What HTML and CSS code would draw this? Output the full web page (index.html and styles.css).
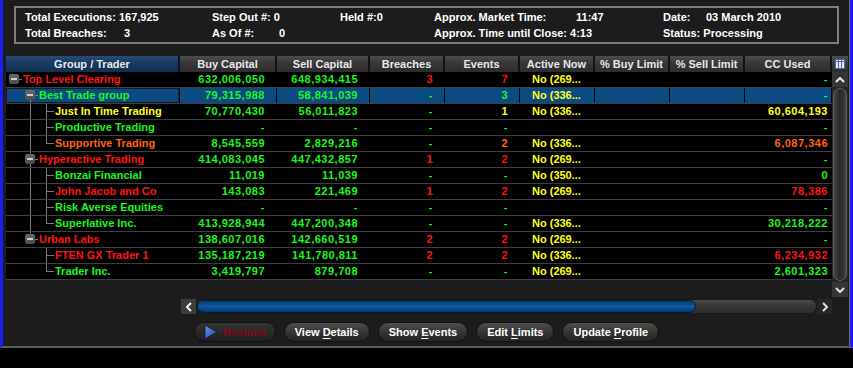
FILE: index.html
```html
<!DOCTYPE html>
<html lang="en">
<head>
  <meta charset="UTF-8">
  <title>Risk Monitor</title>
  <link rel="stylesheet" href="styles.css">
</head>
<body>

  <div class="window">

    <div class="summary">
      <span>Total Executions: 167,925</span>
      <span>Step Out #: 0</span>
      <span>Held #:0</span>
      <span><span class="lbl lbl-time">Approx. Market Time:</span>11:47</span>
      <span><span class="lbl lbl-date">Date:</span>03 March 2010</span>

      <span><span class="lbl lbl-breach">Total Breaches:</span>3</span>
      <span><span class="lbl lbl-asof">As Of #:</span>0</span>
      <span></span>
      <span>Approx. Time until Close: 4:13</span>
      <span>Status: Processing</span>
    </div>

    <div class="frame">
      <div class="grid">
        <div class="head">
          <div class="h-tree">Group / Trader</div>
          <div>Buy Capital</div>
          <div>Sell Capital</div>
          <div>Breaches</div>
          <div>Events</div>
          <div>Active Now</div>
          <div>% Buy Limit</div>
          <div>% Sell Limit</div>
          <div>CC Used</div>
        </div>

        <div class="row">
          <div class="tree r"><span class="gd exp"><span class="box"></span></span><span class="name">Top Level Clearing</span></div>
          <div class="n g">632,006,050</div><div class="n g">648,934,415</div>
          <div class="n r">3</div><div class="n r">7</div>
          <div class="an">No (269...</div><div></div><div></div>
          <div class="n cc g">-</div>
        </div>

        <div class="row sel">
          <div class="tree g focus"><span class="gd"></span><span class="gd exp down"><span class="box"></span></span><span class="name">Best Trade group</span></div>
          <div class="n g">79,315,988</div><div class="n g">58,841,039</div>
          <div class="n g">-</div><div class="n g">3</div>
          <div class="an">No (336...</div><div></div><div></div>
          <div class="n cc g">-</div>
        </div>

        <div class="row">
          <div class="tree y"><span class="gd"></span><span class="gd pipe"></span><span class="gd tee"></span><span class="name">Just In Time Trading</span></div>
          <div class="n g">70,770,430</div><div class="n g">56,011,823</div>
          <div class="n g">-</div><div class="n y">1</div>
          <div class="an">No (336...</div><div></div><div></div>
          <div class="n cc y">60,604,193</div>
        </div>

        <div class="row">
          <div class="tree g"><span class="gd"></span><span class="gd pipe"></span><span class="gd tee"></span><span class="name">Productive Trading</span></div>
          <div class="n g">-</div><div class="n g">-</div>
          <div class="n g">-</div><div class="n g">-</div>
          <div class="an"></div><div></div><div></div>
          <div class="n cc g">-</div>
        </div>

        <div class="row">
          <div class="tree o"><span class="gd"></span><span class="gd pipe"></span><span class="gd end"></span><span class="name">Supportive Trading</span></div>
          <div class="n g">8,545,559</div><div class="n g">2,829,216</div>
          <div class="n g">-</div><div class="n o">2</div>
          <div class="an">No (336...</div><div></div><div></div>
          <div class="n cc o">6,087,346</div>
        </div>

        <div class="row">
          <div class="tree r"><span class="gd"></span><span class="gd exp through"><span class="box"></span></span><span class="name">Hyperactive Trading</span></div>
          <div class="n g">414,083,045</div><div class="n g">447,432,857</div>
          <div class="n r">1</div><div class="n r">2</div>
          <div class="an">No (269...</div><div></div><div></div>
          <div class="n cc g">-</div>
        </div>

        <div class="row">
          <div class="tree g"><span class="gd"></span><span class="gd pipe"></span><span class="gd tee"></span><span class="name">Bonzai Financial</span></div>
          <div class="n g">11,019</div><div class="n g">11,039</div>
          <div class="n g">-</div><div class="n g">-</div>
          <div class="an">No (350...</div><div></div><div></div>
          <div class="n cc g">0</div>
        </div>

        <div class="row">
          <div class="tree r"><span class="gd"></span><span class="gd pipe"></span><span class="gd tee"></span><span class="name">John Jacob and Co</span></div>
          <div class="n g">143,083</div><div class="n g">221,469</div>
          <div class="n r">1</div><div class="n r">2</div>
          <div class="an">No (269...</div><div></div><div></div>
          <div class="n cc r">78,386</div>
        </div>

        <div class="row">
          <div class="tree g"><span class="gd"></span><span class="gd pipe"></span><span class="gd tee"></span><span class="name">Risk Averse Equities</span></div>
          <div class="n g">-</div><div class="n g">-</div>
          <div class="n g">-</div><div class="n g">-</div>
          <div class="an"></div><div></div><div></div>
          <div class="n cc g">-</div>
        </div>

        <div class="row">
          <div class="tree g"><span class="gd"></span><span class="gd pipe"></span><span class="gd end"></span><span class="name">Superlative Inc.</span></div>
          <div class="n g">413,928,944</div><div class="n g">447,200,348</div>
          <div class="n g">-</div><div class="n g">-</div>
          <div class="an">No (336...</div><div></div><div></div>
          <div class="n cc g">30,218,222</div>
        </div>

        <div class="row">
          <div class="tree r"><span class="gd"></span><span class="gd exp up"><span class="box"></span></span><span class="name">Urban Labs</span></div>
          <div class="n g">138,607,016</div><div class="n g">142,660,519</div>
          <div class="n r">2</div><div class="n r">2</div>
          <div class="an">No (269...</div><div></div><div></div>
          <div class="n cc g">-</div>
        </div>

        <div class="row">
          <div class="tree r"><span class="gd"></span><span class="gd"></span><span class="gd tee"></span><span class="name">FTEN GX Trader 1</span></div>
          <div class="n g">135,187,219</div><div class="n g">141,780,811</div>
          <div class="n r">2</div><div class="n r">2</div>
          <div class="an">No (336...</div><div></div><div></div>
          <div class="n cc r">6,234,932</div>
        </div>

        <div class="row">
          <div class="tree g"><span class="gd"></span><span class="gd"></span><span class="gd end"></span><span class="name">Trader Inc.</span></div>
          <div class="n g">3,419,797</div><div class="n g">879,708</div>
          <div class="n g">-</div><div class="n g">-</div>
          <div class="an">No (269...</div><div></div><div></div>
          <div class="n cc g">2,601,323</div>
        </div>
      </div>

      <div class="vscroll">
        <div class="colpick">
          <svg width="10" height="10" viewBox="0 0 10 10">
            <rect x="0" y="0" width="10" height="10" fill="#5a64a8"/>
            <rect x="1" y="1" width="2" height="8" fill="#dfe3ff"/>
            <rect x="4" y="1" width="2" height="8" fill="#dfe3ff"/>
            <rect x="7" y="1" width="2" height="8" fill="#dfe3ff"/>
            <rect x="0" y="2" width="10" height="1" fill="#5a64a8"/>
          </svg>
        </div>
        <div class="vs-btn">
          <svg width="10" height="6" viewBox="0 0 10 6"><polyline points="1,5 5,1 9,5" fill="none" stroke="#e6e6e6" stroke-width="2"/></svg>
        </div>
        <div class="vs-thumb"></div>
        <div class="vs-btn">
          <svg width="10" height="6" viewBox="0 0 10 6"><polyline points="1,1 5,5 9,1" fill="none" stroke="#e6e6e6" stroke-width="2"/></svg>
        </div>
      </div>
    </div>

    <div class="hscroll">
      <div class="hs-btn hs-left">
        <svg width="6" height="10" viewBox="0 0 6 10"><polyline points="5,1 1,5 5,9" fill="none" stroke="#eee" stroke-width="2"/></svg>
      </div>
      <div class="hs-track">
        <div class="hs-thumb"></div>
      </div>
      <div class="hs-btn hs-right">
        <svg width="6" height="10" viewBox="0 0 6 10"><polyline points="1,1 5,5 1,9" fill="none" stroke="#ddd" stroke-width="2"/></svg>
      </div>
    </div>

    <div class="actions">
      <button class="btn btn-off">
        <svg class="play" width="14" height="16" viewBox="0 0 14 16">
          <defs>
            <linearGradient id="play" x1="0" y1="0" x2="1" y2="1">
              <stop offset="0" stop-color="#6f9ae6"/>
              <stop offset="1" stop-color="#1d3f8f"/>
            </linearGradient>
          </defs>
          <polygon points="1,1 13,8 1,15" fill="url(#play)" stroke="#0e2050" stroke-width="1"/>
        </svg>
        <span>Resume</span>
      </button>
      <button class="btn"><span>View <u>D</u>etails</span></button>
      <button class="btn"><span>Show <u>E</u>vents</span></button>
      <button class="btn"><span>Edit <u>L</u>imits</span></button>
      <button class="btn"><span>Update <u>P</u>rofile</span></button>
    </div>

  </div>

</body>
</html>
```

FILE: styles.css
```css
* {
  box-sizing: border-box;
}

body {
  margin: 0;
  background: #000;
  color: #fff;
  font: bold 11px "Liberation Sans", Arial, sans-serif;
}

.window {
  height: 348px;
  padding-top: 6px;
  background: #1c1c1c;
  border-left: 3px solid #1d1df2;
  border-right: 3px solid #1d1df2;
  border-bottom: 2px solid #5c5c5c;
  box-shadow: inset -1px 0 #6e6e6e;
}

/* summary panel */

.summary {
  width: 825px;
  height: 38px;
  margin-left: 11px;
  padding: 1px 0 1px 9px;
  border: 2px solid #7e7e7e;
  display: grid;
  grid-template-columns: 187px 128px 94px 229px 1fr;
  grid-auto-rows: 16px;
  line-height: 16px;
  white-space: nowrap;
}

.lbl {
  display: inline-block;
}

.lbl-breach { width: 99px; }
.lbl-asof { width: 67px; }
.lbl-time { width: 142px; }
.lbl-date { width: 43px; }

/* grid */

.frame {
  display: flex;
  height: 241px;
  margin: 12px 0 0 3px;
}

.grid {
  width: 826px;
  --cols: 174px 97px 93px 75px 75px 75px 75px 75px 87px;
}

.head {
  display: grid;
  grid-template-columns: var(--cols);
  height: 16px;
}

.head > div {
  background: linear-gradient(#4c4c4c, #383838 45%, #2c2c2c);
  border-right: 2px solid #121212;
  color: #e8e8e8;
  text-align: center;
  line-height: 16px;
  white-space: nowrap;
  overflow: hidden;
}

.head > .h-tree {
  background: linear-gradient(#2a4c74, #183a62 45%, #11304f);
}

.row {
  display: grid;
  grid-template-columns: var(--cols);
  height: 16px;
  background: #000;
  border-bottom: 1px solid #3e3e3e;
}

.row > div {
  line-height: 15px;
  border-right: 1px solid #000;
  white-space: nowrap;
  overflow: hidden;
}

.row.sel {
  background: #0a4b84;
}

.row.sel > .focus {
  box-shadow: inset 0 0 0 1px #1b1b1b;
}

.n {
  text-align: right;
  padding-right: 11px;
  letter-spacing: 0.5px;
}

.n.cc {
  padding-right: 3px;
}

.an {
  padding-left: 12px;
  color: #ffff1a;
}

.r { color: #ff1414; }
.g { color: #1ef51e; }
.y { color: #ffff1a; }
.o { color: #ff6410; }

/* tree guides */

.tree {
  display: flex;
}

.gd {
  flex: none;
  width: 16px;
  height: 15px;
  --ln: #7a7a7a;
}

.name {
  padding-left: 1px;
}

.pipe {
  background: linear-gradient(var(--ln), var(--ln)) 8px 0 / 1px 100% no-repeat;
}

.tee {
  background:
    linear-gradient(var(--ln), var(--ln)) 8px 0 / 1px 100% no-repeat,
    linear-gradient(var(--ln), var(--ln)) 8px 7px / 8px 1px no-repeat;
}

.end {
  background:
    linear-gradient(var(--ln), var(--ln)) 8px 0 / 1px 8px no-repeat,
    linear-gradient(var(--ln), var(--ln)) 8px 7px / 8px 1px no-repeat;
}

.exp {
  display: flex;
  align-items: center;
  padding-left: 3px;
  background: linear-gradient(var(--ln), var(--ln)) 12px 7px / 4px 1px no-repeat;
}

.exp.down {
  background:
    linear-gradient(var(--ln), var(--ln)) 12px 7px / 4px 1px no-repeat,
    linear-gradient(var(--ln), var(--ln)) 8px 7px / 1px 8px no-repeat;
}

.exp.through {
  background:
    linear-gradient(var(--ln), var(--ln)) 12px 7px / 4px 1px no-repeat,
    linear-gradient(var(--ln), var(--ln)) 8px 0 / 1px 100% no-repeat;
}

.exp.up {
  background:
    linear-gradient(var(--ln), var(--ln)) 12px 7px / 4px 1px no-repeat,
    linear-gradient(var(--ln), var(--ln)) 8px 0 / 1px 8px no-repeat;
}

.box {
  width: 10px;
  height: 10px;
  margin-top: -1px;
  border-radius: 2px;
  background:
    linear-gradient(#cfcfcf, #cfcfcf) center / 6px 2px no-repeat,
    linear-gradient(#6a6a6a, #4a4a4a);
}

/* vertical scroll bar */

.vscroll {
  width: 16px;
  display: flex;
  flex-direction: column;
  background: #262626;
}

.colpick {
  height: 16px;
  display: flex;
  align-items: center;
  justify-content: center;
  background: linear-gradient(#4c4c4c, #2c2c2c);
}

.vs-btn {
  height: 15px;
  display: flex;
  align-items: center;
  justify-content: center;
  background: #363636;
}

.vs-thumb {
  flex: 1;
  margin: 1px 1px;
  border-radius: 7px;
  border: 1px solid #5e5e5e;
  background: linear-gradient(to right, #454545, #2a2a2a 45%, #333 80%, #474747);
}

/* horizontal scroll bar */

.hscroll {
  display: flex;
  width: 651px;
  height: 15px;
  margin: 2px 0 0 178px;
}

.hs-btn {
  width: 15px;
  display: flex;
  align-items: center;
  justify-content: center;
}

.hs-left {
  background: #3c3c3c;
}

.hs-right {
  background: #262626;
}

.hs-track {
  flex: 1;
  border-radius: 8px;
  background: linear-gradient(#4a4a4a, #363636 50%, #2c2c2c);
  border: 1px solid #1a1a1a;
}

.hs-thumb {
  width: 499px;
  height: 100%;
  border-radius: 7px;
  border: 1px solid #02193a;
  background: linear-gradient(#0a3a70, #0b5aa2 50%, #083567);
}

/* action buttons */

.actions {
  display: flex;
  justify-content: center;
  gap: 8px;
  margin-top: 8px;
}

.btn {
  height: 20px;
  padding: 0 10px;
  display: flex;
  align-items: center;
  border-radius: 10px;
  border: 1px solid #121212;
  background: linear-gradient(#4e4e4e, #353535 50%, #242424);
  color: #fff;
  font: inherit;
  white-space: nowrap;
  cursor: pointer;
}

.btn u {
  text-decoration-thickness: 1px;
  text-underline-offset: 2px;
}

.btn .play {
  margin-right: 5px;
}

.btn-off {
  padding-left: 9px;
  padding-right: 9px;
  background: linear-gradient(#363636, #282828 50%, #1f1f1f);
  color: #7d0c14;
  cursor: default;
}
```
